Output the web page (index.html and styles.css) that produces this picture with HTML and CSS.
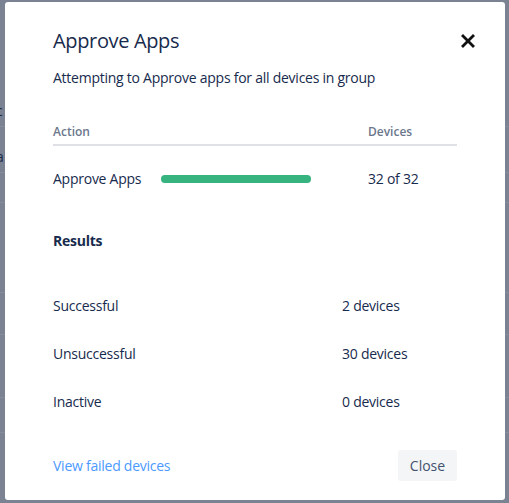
FILE: index.html
```html
<!DOCTYPE html>
<html>
<head>
<meta charset="utf-8">
<link rel="stylesheet" href="styles.css">
</head>
<body>
<div class="page">
  <div class="bg-row r1"><span>c</span></div>
  <div class="bg-row r2"><span>a</span></div>
  <div class="bg-row r3"></div>
  <div class="bg-row r4"></div>
  <div class="bg-row r5"></div>
  <div class="bg-row r6"></div>
  <div class="bg-row r7"></div>
</div>
<div class="modal">
  <div class="header">
    <h1 class="title">Approve Apps</h1>
    <button class="close-x" aria-label="Close">
      <svg width="14" height="14" viewBox="0 0 14 14"><path d="M2 2 L12 12 M12 2 L2 12" stroke="#111" stroke-width="2.8" stroke-linecap="square"/></svg>
    </button>
  </div>
  <p class="subtitle">Attempting to Approve apps for all devices in group</p>
  <div class="thead">
    <span class="col-action">Action</span>
    <span class="col-devices">Devices</span>
  </div>
  <div class="trow">
    <span class="col-name">Approve Apps</span>
    <span class="bar"><span class="bar-fill" style="width:100%"></span></span>
    <span class="col-devices">32 of 32</span>
  </div>
  <h2 class="results">Results</h2>
  <div class="result"><span class="r-label">Successful</span><span class="r-value">2 devices</span></div>
  <div class="result"><span class="r-label">Unsuccessful</span><span class="r-value">30 devices</span></div>
  <div class="result"><span class="r-label">Inactive</span><span class="r-value">0 devices</span></div>
  <div class="footer">
    <a class="link" href="#">View failed devices</a>
    <button class="btn">Close</button>
  </div>
</div>
</body>
</html>
```
FILE: styles.css
```css
* { box-sizing: border-box; }
html, body {
  margin: 0;
  padding: 0;
  width: 509px;
  height: 503px;
  overflow: hidden;
}
body {
  background: #7b8393;
  font-family: "Open Sans", "Noto Sans", sans-serif;
  color: #172b4d;
  position: relative;
}
.page {
  display: flex;
  flex-direction: column;
}
.bg-row {
  border-bottom: 1px solid #858c9a;
  font-size: 14px;
  color: #1d2c4a;
  display: flex;
  align-items: flex-end;
  padding-left: 0;
}
.bg-row span { margin-left: -4px; line-height: 18px; }
.r1 { height: 127px; padding-bottom: 6px; }
.r2 { height: 46px; padding-bottom: 6px; }
.r3 { height: 30px; }
.r4 { height: 90px; }
.r5 { height: 42px; }
.r6 { height: 63px; }
.r7 { height: 35px; }

.modal {
  position: absolute;
  left: 5px;
  top: 2px;
  width: 500px;
  height: 498px;
  background: #fff;
  border-radius: 3px;
  padding: 25px 48px 0 48px;
  display: flex;
  flex-direction: column;
  letter-spacing: -0.25px;
}
.header {
  display: flex;
  justify-content: space-between;
  align-items: center;
  height: 28px;
}
.title {
  margin: 0;
  font-size: 20px;
  font-weight: 400;
  line-height: 28px;
  color: #172b4d;
  letter-spacing: -0.35px;
}
.close-x {
  border: 0;
  background: none;
  padding: 0;
  margin-right: -18px;
  width: 14px;
  height: 14px;
  display: flex;
}
.subtitle {
  margin: 13px 0 0;
  font-size: 14px;
  line-height: 20px;
  color: #172b4d;
}
.thead {
  margin-top: 36px;
  display: flex;
  font-size: 12px;
  font-weight: 600;
  line-height: 16px;
  color: #6b778c;
  padding-bottom: 4px;
  border-bottom: 2px solid #dfe1e6;
  letter-spacing: 0;
}
.col-action { flex: 1; }
.col-devices { width: 89px; }
.trow {
  margin-top: 23px;
  display: flex;
  align-items: center;
  font-size: 14px;
  line-height: 20px;
}
.col-name { width: 108px; }
.bar {
  width: 150px;
  height: 8px;
  border-radius: 4px;
  background: #ebecf0;
  margin-right: 57px;
  display: flex;
}
.bar-fill {
  height: 8px;
  border-radius: 4px;
  background: #36b37e;
}
.trow .col-devices { margin-left: auto; }
.results {
  margin: 42px 0 0;
  font-size: 14px;
  font-weight: 700;
  line-height: 20px;
}
.result {
  display: flex;
  font-size: 14px;
  line-height: 20px;
}
.results + .result { margin-top: 45px; }
.result + .result { margin-top: 28px; }
.r-label { width: 289px; }
.footer {
  margin-top: 38px;
  display: flex;
  justify-content: space-between;
  align-items: center;
}
.link {
  font-size: 14px;
  line-height: 20px;
  color: #4c9aff;
  text-decoration: none;
}
.btn {
  border: 0;
  background: #f4f5f7;
  border-radius: 3px;
  width: 59px;
  height: 31px;
  font-family: inherit;
  font-size: 14px;
  font-weight: 500;
  color: #42526e;
  padding: 0;
  letter-spacing: 0;
}
```
